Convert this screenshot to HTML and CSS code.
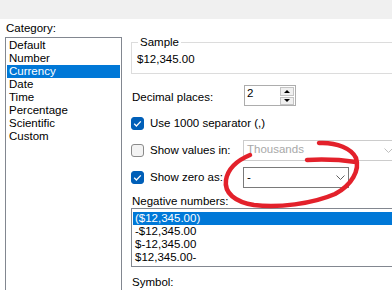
FILE: index.html
```html
<!DOCTYPE html>
<html lang="en">
  <head>
    <meta charset="UTF-8" />
    <title>Format Cells - Currency</title>
    <link rel="stylesheet" href="styles.css">
  </head>
  <body>
    <div class="titlebar"></div>

    <div class="dialog">
      <div class="category">
        <div class="caption">Category:</div>
        <ul class="listbox cat-list">
          <li>Default</li>
          <li>Number</li>
          <li class="selected">Currency</li>
          <li>Date</li>
          <li>Time</li>
          <li>Percentage</li>
          <li>Scientific</li>
          <li>Custom</li>
        </ul>
      </div>

      <div class="options">
        <fieldset class="sample">
          <legend>Sample</legend>
          <div class="sample-value">$12,345.00</div>
        </fieldset>

        <div class="row row-first">
          <div class="field-label">Decimal places:</div>
          <div class="spin">
            <span class="spin-value">2</span>
            <span class="spin-buttons">
              <span class="spin-btn"><span class="tri up"></span></span>
              <span class="spin-btn"><span class="tri down"></span></span>
            </span>
          </div>
        </div>

        <div class="row row-sep">
          <label class="check">
            <span class="box checked">
              <svg width="13" height="13" viewBox="0 0 13 13"><polyline points="3.2,6.8 5.4,9 9.8,4.4" /></svg>
            </span>
            Use 1000 separator (,)
          </label>
        </div>

        <div class="row">
          <label class="check field-label">
            <span class="box"></span>
            Show values in:
          </label>
          <div class="combo disabled">
            <span class="combo-text">Thousands</span>
            <svg class="chevron" width="9" height="5" viewBox="0 0 9 5"><polyline points="0.5,0.5 4.5,4.5 8.5,0.5" /></svg>
          </div>
        </div>

        <div class="row">
          <label class="check field-label">
            <span class="box checked">
              <svg width="13" height="13" viewBox="0 0 13 13"><polyline points="3.2,6.8 5.4,9 9.8,4.4" /></svg>
            </span>
            Show zero as:
          </label>
          <div class="combo">
            <span>-</span>
            <svg class="chevron" width="9" height="5" viewBox="0 0 9 5"><polyline points="0.5,0.5 4.5,4.5 8.5,0.5" /></svg>
          </div>
        </div>

        <div class="caption neg-caption">Negative numbers:</div>
        <ul class="listbox neg-list">
          <li class="selected">($12,345.00)</li>
          <li>-$12,345.00</li>
          <li>$-12,345.00</li>
          <li>$12,345.00-</li>
        </ul>

        <div class="caption symbol-caption">Symbol:</div>
      </div>
    </div>

    <!-- hand drawn marker circle -->
    <svg class="ink" width="392" height="290" viewBox="0 0 392 290">
      <path d="M319 143 C 337 142, 352 149, 356 158 C 360 170, 352 185, 335 194 C 312 204, 278 208, 254 205 C 235 202, 224 193, 226 180 C 228 168, 238 160, 250 155" />
      <path d="M307 160 C 325 159, 342 160, 356 162" />
    </svg>
  </body>
</html>
```

FILE: styles.css
```css
html, body {
  margin: 0;
  overflow: hidden;
}

body {
  background: #fff;
  color: #000;
  font-family: 'Liberation Sans', Arial, sans-serif;
  font-size: 11.5px;
  line-height: 13px;
  position: relative;
  width: 392px;
  height: 290px;
}

.titlebar {
  height: 19px;
  background: #f0f0f0;
}

.dialog {
  display: flex;
}

.category {
  width: 117px;
  margin-left: 5px;
  flex-shrink: 0;
}

.caption {
  height: 13px;
  white-space: nowrap;
}

.category .caption {
  margin-top: 3px;
  margin-bottom: 2px;
  padding-left: 1px;
}

.listbox {
  list-style: none;
  margin: 0;
  border: 1px solid #828790;
  background: #fff;
}

.listbox li {
  height: 13px;
  padding-left: 2px;
  white-space: nowrap;
}

.listbox li.selected {
  background: #0078d7;
  color: #fff;
}

.cat-list {
  height: 260px;
  padding: 1px 1px 0 1px;
}

.options {
  margin-left: 9px;
  width: 280px;
  flex-shrink: 0;
}

/* Sample group box */
.sample {
  margin: 16px 0 0 0;
  padding: 4px 5px 7px 5px;
  border: 1px solid #dcdcdc;
}

.sample legend {
  padding: 0 2px;
  margin-left: 1px;
  line-height: 14px;
}

.sample-value {
  height: 13px;
}

.row {
  display: flex;
  align-items: center;
  height: 21px;
  margin-top: 6px;
}

.row-first {
  margin-top: 11px;
}

.row-sep {
  margin-top: 7px;
}

.field-label {
  width: 112px;
  flex-shrink: 0;
}

.row-first .field-label {
  padding-top: 4px;
  padding-left: 1px;
}

/* spin box */
.spin {
  width: 50px;
  height: 19px;
  border: 1px solid #adadad;
  display: flex;
  justify-content: space-between;
}

.spin-value {
  padding: 1px 0 0 2px;
}

.spin-buttons {
  display: flex;
  flex-direction: column;
  gap: 1px;
  padding: 1px 1px 0 0;
}

.spin-btn {
  width: 12px;
  height: 7px;
  background: #f0f0f0;
  border: 1px solid #c4c4c4;
  display: flex;
  align-items: center;
  justify-content: center;
}

.tri {
  width: 0;
  height: 0;
  border-left: 3px solid transparent;
  border-right: 3px solid transparent;
}

.tri.up {
  border-bottom: 3px solid #000;
}

.tri.down {
  border-top: 3px solid #000;
}

/* checkboxes */
.check {
  display: flex;
  align-items: center;
  gap: 6px;
  white-space: nowrap;
}

.box {
  width: 11px;
  height: 11px;
  border: 1px solid #8a8a8a;
  border-radius: 3px;
  background: #f3f3f3;
  flex-shrink: 0;
  position: relative;
}

.box.checked {
  background: #005fb8;
  border-color: #005fb8;
}

.box svg {
  position: absolute;
  left: -1px;
  top: -1px;
}

.box polyline {
  fill: none;
  stroke: #fff;
  stroke-width: 1.3;
}

/* combo boxes */
.combo {
  width: 98px;
  height: 19px;
  border: 1px solid #7a7a7a;
  background: #fff;
  display: flex;
  align-items: center;
  justify-content: space-between;
  padding: 0 3px;
  box-sizing: content-box;
  flex-shrink: 0;
}

.combo.disabled {
  width: 146px;
  border-color: #cccccc;
  color: #a8a8a8;
}

.combo-text {
  margin-top: -2px;
}

.chevron polyline {
  fill: none;
  stroke: #606060;
  stroke-width: 1;
}

.combo.disabled .chevron polyline {
  stroke: #bfbfbf;
}

.neg-caption {
  margin-top: 7px;
  padding-left: 1px;
}

.neg-list {
  width: 268px;
  height: 54px;
  padding: 3px 0 0 1px;
}

.symbol-caption {
  margin-top: 9px;
  padding-left: 1px;
}

/* red marker annotation over the form */
.ink {
  position: absolute;
  left: 0;
  top: 0;
  pointer-events: none;
}

.ink path {
  fill: none;
  stroke: #e3212b;
  stroke-width: 4.5;
  stroke-linecap: round;
  stroke-linejoin: round;
}
```
